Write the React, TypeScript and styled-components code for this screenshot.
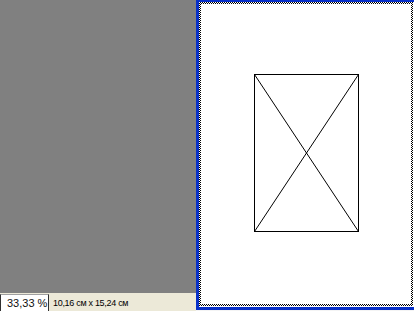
import React, { FC } from 'react';
import styled, { createGlobalStyle } from 'styled-components';

const GlobalStyle = createGlobalStyle`
  html, body {
    margin: 0;
    padding: 0;
    background: #ffffff;
  }
  #root {
    width: 414px;
    height: 311px;
    overflow: hidden;
  }
`;

const Window = styled.div`
  width: 414px;
  height: 311px;
  display: grid;
  grid-template-columns: 196px 218px;
  align-items: start;
  background: #f4f4f4;
`;

const LeftColumn = styled.div`
  display: flex;
  flex-direction: column;
  height: 311px;
`;

const Workspace = styled.div`
  flex: 1;
  background: #808080;
`;

const StatusBar = styled.div`
  height: 18px;
  background: #ece9d8;
  display: flex;
  flex-direction: row;
  align-items: flex-end;
`;

const ZoomBox = styled.div`
  width: 49px;
  height: 17px;
  box-sizing: border-box;
  background: #ffffff;
  border-left: 1px solid #303030;
  border-right: 1px solid #303030;
  border-top: 1px solid #a0a0a0;
  display: flex;
  align-items: center;
  padding-left: 6px;
  font-family: "Liberation Sans", Arial, sans-serif;
  font-size: 11px;
  color: #101010;
  white-space: nowrap;
`;

const SizeLabel = styled.div`
  height: 17px;
  display: flex;
  align-items: center;
  padding-left: 4px;
  font-family: "Liberation Sans", Arial, sans-serif;
  font-size: 9px;
  letter-spacing: -0.3px;
  color: #000000;
  white-space: nowrap;
`;

const PageView = styled.div`
  height: 310px;
  box-sizing: border-box;
  border-left: 3px solid #0830c8;
  border-top: 2px solid #0830c8;
  border-bottom: 3px solid #0830c8;
  padding-right: 1px;
  padding-bottom: 1px;
  background: #ffffff;
  display: flex;
`;

const Selection = styled.div`
  flex: 1;
  padding: 2px;
  background: repeating-conic-gradient(#000000 0 25%, #ffffff 0 50%) 0 0 / 2px 2px;
  display: flex;
`;

const Sheet = styled.div`
  flex: 1;
  background: #ffffff;
  display: flex;
  align-items: center;
  justify-content: center;
  padding-bottom: 3px;
`;

const Placeholder: FC<{ width: number; height: number }> = ({ width, height }) => (
  <svg width={width} height={height} viewBox={`0 0 ${width} ${height}`} shapeRendering="crispEdges">
    <rect x={0.5} y={0.5} width={width - 1} height={height - 1} fill="#ffffff" stroke="#000000" strokeWidth={1} />
    <line x1={0.5} y1={0.5} x2={width - 0.5} y2={height - 0.5} stroke="#000000" strokeWidth={1} shapeRendering="auto" />
    <line x1={width - 0.5} y1={0.5} x2={0.5} y2={height - 0.5} stroke="#000000" strokeWidth={1} shapeRendering="auto" />
  </svg>
);

const App: FC = () => (
  <>
    <GlobalStyle />
    <Window>
      <LeftColumn>
        <Workspace />
        <StatusBar>
          <ZoomBox>33,33 %</ZoomBox>
          <SizeLabel>10,16 см x 15,24 см</SizeLabel>
        </StatusBar>
      </LeftColumn>
      <PageView>
        <Selection>
          <Sheet>
            <Placeholder width={105} height={158} />
          </Sheet>
        </Selection>
      </PageView>
    </Window>
  </>
);

export default App;
